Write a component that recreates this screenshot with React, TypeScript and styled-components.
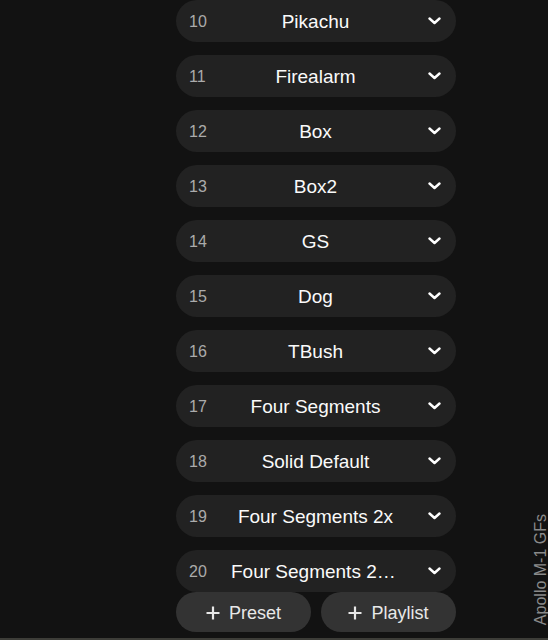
import React from "react";
import styled, { createGlobalStyle } from "styled-components";

const Global = createGlobalStyle`
  html, body { margin: 0; padding: 0; background: #121212; overflow: hidden; }
  body { font-family: "Liberation Sans", Arial, sans-serif; }
`;

const Page = styled.div`
  width: 548px;
  height: 640px;
  background: #121212;
  display: flex;
  flex-direction: column;
  position: relative;
  box-sizing: border-box;
  border-bottom: 2px solid #3d3d38;
`;

const Column = styled.div`
  width: 280px;
  display: flex;
  flex-direction: column;
  margin-left: 176px;
`;

const List = styled.div`
  display: flex;
  flex-direction: column;
  gap: 13px;
`;

const Row = styled.div`
  height: 42px;
  border-radius: 21px;
  background: #222222;
  display: grid;
  grid-template-columns: 42px 1fr 42px;
  align-items: center;
  padding: 0 14px 0 13px;
  box-sizing: border-box;
`;

const Num = styled.span`
  font-size: 16px;
  color: #ababab;
  padding-top: 1px;
`;

const Title = styled.span`
  font-size: 19px;
  color: #fafafa;
  text-align: center;
  white-space: nowrap;
  overflow: hidden;
  text-overflow: ellipsis;
  padding-top: 2px;
`;

const Chev = styled.span`
  display: flex;
  justify-content: flex-end;
  padding-right: 1px;
  margin-top: -1px;
`;

const Footer = styled.div`
  display: grid;
  grid-template-columns: 1fr 1fr;
  gap: 10px;
`;

const Btn = styled.div`
  height: 40px;
  border-radius: 20px;
  background: #333333;
  display: flex;
  align-items: center;
  justify-content: center;
  gap: 9px;
  font-size: 18px;
  color: #e8e8e8;
  padding-top: 2px;
  box-sizing: border-box;
`;

const Side = styled.div`
  position: absolute;
  right: 0px;
  bottom: 13px;
  writing-mode: vertical-rl;
  transform: rotate(180deg);
  font-size: 16px;
  color: #8a8a8a;
  font-family: "Liberation Sans", Arial, sans-serif;
  width: 16px;
`;

const Chevron = () => (
  <svg width="13" height="8" viewBox="0 0 13 8">
    <path d="M1.5 1.5 L6.5 6 L11.5 1.5" fill="none" stroke="#ffffff" strokeWidth="2.4" strokeLinecap="round" strokeLinejoin="round" />
  </svg>
);

const Plus = () => (
  <svg width="14" height="14" viewBox="0 0 14 14">
    <path d="M7 0.5 V13.5 M0.5 7 H13.5" stroke="#e8e8e8" strokeWidth="2.2" />
  </svg>
);

const items: [number, string][] = [
  [10, "Pikachu"],
  [11, "Firealarm"],
  [12, "Box"],
  [13, "Box2"],
  [14, "GS"],
  [15, "Dog"],
  [16, "TBush"],
  [17, "Four Segments"],
  [18, "Solid Default"],
  [19, "Four Segments 2x"],
  [20, "Four Segments 2x Fast"],
];

export default function App() {
  return (
    <>
      <Global />
      <Page>
        <Column>
          <List>
            {items.map(([n, t]) => (
              <Row key={n}>
                <Num>{n}</Num>
                <Title>{t}</Title>
                <Chev>
                  <Chevron />
                </Chev>
              </Row>
            ))}
          </List>
          <Footer>
            <Btn>
              <Plus />
              Preset
            </Btn>
            <Btn>
              <Plus />
              Playlist
            </Btn>
          </Footer>
        </Column>
        <Side>Apollo M-1 GFs</Side>
      </Page>
    </>
  );
}
